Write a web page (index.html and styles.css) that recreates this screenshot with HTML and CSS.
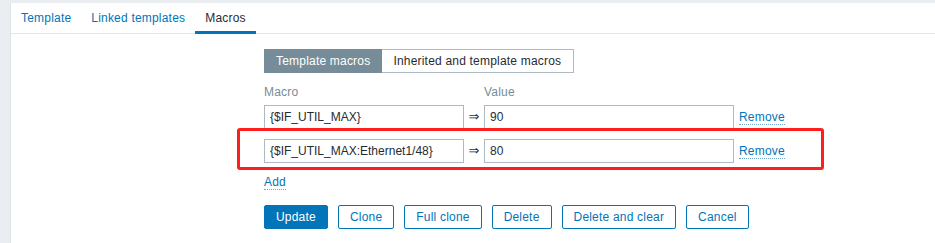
FILE: index.html
```html
<!DOCTYPE html>
<html lang="en">
<head>
    <meta charset="UTF-8">
    <title>Template macros</title>
    <link rel="stylesheet" href="styles.css">
</head>
<body>
    <div class="panel">
        <!-- tabs -->
        <ul class="tabs">
            <li><a href="#">Template</a></li>
            <li><a href="#">Linked templates</a></li>
            <li class="active"><a href="#">Macros</a></li>
        </ul>

        <form class="macro-form">
            <div class="toggle">
                <span class="toggle-item selected">Template macros</span>
                <span class="toggle-item">Inherited and template macros</span>
            </div>

            <div class="macro-head">
                <span class="col-macro">Macro</span>
                <span class="col-value">Value</span>
            </div>

            <div class="macro-row">
                <input class="macro-input" type="text" value="{$IF_UTIL_MAX}">
                <span class="arrow">&rArr;</span>
                <input class="value-input" type="text" value="90">
                <a class="link-action remove" href="#">Remove</a>
            </div>

            <div class="macro-row marked">
                <input class="macro-input" type="text" value="{$IF_UTIL_MAX:Ethernet1/48}">
                <span class="arrow">&rArr;</span>
                <input class="value-input" type="text" value="80">
                <a class="link-action remove" href="#">Remove</a>
                <!-- red highlight drawn over the row -->
                <div class="highlight"></div>
            </div>

            <a class="link-action add" href="#">Add</a>

            <div class="form-buttons">
                <button type="button" class="btn primary">Update</button>
                <button type="button" class="btn">Clone</button>
                <button type="button" class="btn">Full clone</button>
                <button type="button" class="btn">Delete</button>
                <button type="button" class="btn">Delete and clear</button>
                <button type="button" class="btn">Cancel</button>
            </div>
        </form>
    </div>
</body>
</html>
```

FILE: styles.css
```css
/* base */
html, body {
    height: 100%;
}

body {
    margin: 0;
    padding: 3px 0 0 10px;
    box-sizing: border-box;
    background-color: #ebeef0;
    font-family: "Liberation Sans", Arial, sans-serif;
    font-size: 12px;
    line-height: 14px;
    letter-spacing: 0.2px;
    color: #1f2c33;
}

a {
    color: #0275b8;
    text-decoration: none;
}

/* white panel */
.panel {
    height: 100%;
    background-color: #fff;
    border-left: 1px solid #dfe4e7;
}

/* tabs */
.tabs {
    display: flex;
    margin: 0;
    padding: 0;
    list-style: none;
    border-bottom: 1px solid #e6e9eb;
}

.tabs li {
    height: 31px;
    margin-bottom: -1px;
    box-sizing: border-box;
    padding: 8px 10px 0;
}

.tabs li.active {
    border-bottom: 3px solid #0275b8;
}

.tabs li.active a {
    color: #1f2c33;
}

/* form */
.macro-form {
    padding: 15px 0 0 253px;
}

.toggle {
    display: flex;
}

.toggle-item {
    height: 24px;
    box-sizing: border-box;
    padding: 0 11px;
    line-height: 22px;
    border: 1px solid #acbbc2;
    background-color: #fff;
}

.toggle-item + .toggle-item {
    border-left: none;
    padding-right: 12px;
}

.toggle-item.selected {
    background-color: #768d99;
    border-color: #768d99;
    color: #fff;
}

.macro-head {
    display: flex;
    margin: 12px 0 6px;
    color: #768d99;
}

.col-macro {
    width: 220px;
}

.macro-row {
    position: relative;
    display: flex;
    align-items: center;
    height: 24px;
    margin-bottom: 10px;
}

.macro-row input {
    height: 24px;
    box-sizing: border-box;
    margin: 0;
    padding: 0 5px;
    border: 1px solid #acbbc2;
    font-family: inherit;
    font-size: 12px;
    color: #1f2c33;
    background-color: #fff;
}

.macro-input {
    width: 200px;
}

.value-input {
    width: 250px;
}

.arrow {
    width: 20px;
    text-align: center;
    font-family: "DejaVu Sans", sans-serif;
    font-size: 13px;
    letter-spacing: 0;
}

.link-action {
    border-bottom: 1px dotted #6fa7cc;
}

.remove {
    margin-left: 5px;
}

/* red annotation around the second row */
.highlight {
    position: absolute;
    left: -27px;
    top: -11px;
    width: 587px;
    height: 42px;
    box-sizing: border-box;
    border: 3px solid #ff1e1e;
    border-radius: 3px;
}

.add {
    display: inline-block;
    margin-top: 2px;
}

/* buttons */
.form-buttons {
    display: flex;
    gap: 10px;
    margin-top: 15px;
}

.btn {
    height: 24px;
    margin: 0;
    padding: 0 11px;
    font-family: inherit;
    font-size: 12px;
    letter-spacing: 0.2px;
    color: #0275b8;
    background-color: #fff;
    border: 1px solid #0275b8;
    border-radius: 2px;
    cursor: pointer;
}

.btn.primary {
    color: #fff;
    background-color: #0275b8;
}
```
